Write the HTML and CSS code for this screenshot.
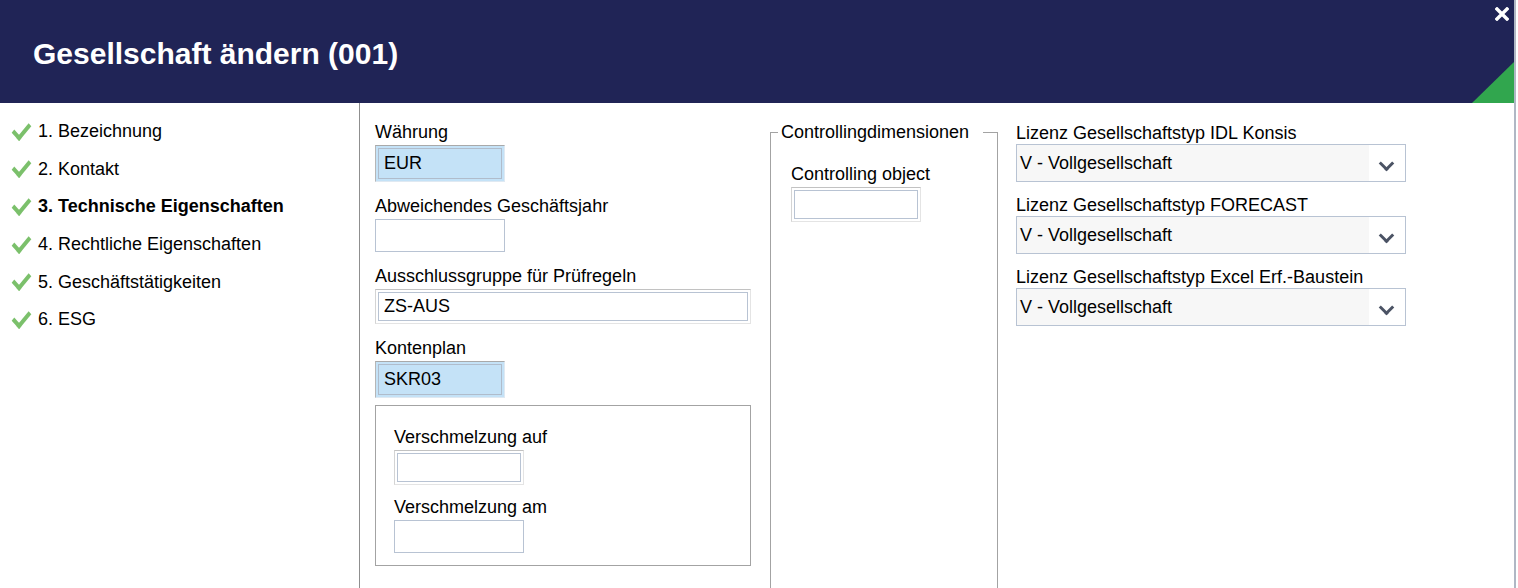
FILE: index.html
```html
<!DOCTYPE html>
<html lang="de">
<head>
    <meta charset="UTF-8" />
    <title>Gesellschaft ändern</title>
    <link rel="stylesheet" href="styles.css">
</head>
<body>
<div class="dialog">
    <div class="header">
        <h1 class="title">Gesellschaft ändern (001)</h1>
        <div class="close">
            <svg width="14" height="14" viewBox="0 0 14 14"><path d="M2 2 L12 12 M12 2 L2 12" stroke="#fff" stroke-width="3.4" stroke-linecap="square"/></svg>
        </div>
        <div class="corner"></div>
    </div>
    <div class="main">
        <ul class="steps">
            <li><span class="check"></span>1. Bezeichnung</li>
            <li><span class="check"></span>2. Kontakt</li>
            <li class="active"><span class="check"></span>3. Technische Eigenschaften</li>
            <li><span class="check"></span>4. Rechtliche Eigenschaften</li>
            <li><span class="check"></span>5. Geschäftstätigkeiten</li>
            <li><span class="check"></span>6. ESG</li>
        </ul>

        <div class="col col-tech">
            <div class="field">
                <label>Währung</label>
                <div class="frame locked short"><input value="EUR" readonly></div>
            </div>
            <div class="field">
                <label>Abweichendes Geschäftsjahr</label>
                <input class="plain short">
            </div>
            <div class="field">
                <label>Ausschlussgruppe für Prüfregeln</label>
                <div class="frame wide"><input value="ZS-AUS"></div>
            </div>
            <div class="field">
                <label>Kontenplan</label>
                <div class="frame locked short"><input value="SKR03" readonly></div>
            </div>
            <div class="merge">
                <div class="field">
                    <label>Verschmelzung auf</label>
                    <div class="frame short"><input></div>
                </div>
                <div class="field">
                    <label>Verschmelzung am</label>
                    <input class="plain short">
                </div>
            </div>
        </div>

        <fieldset class="col-ctrl">
            <legend>Controllingdimensionen</legend>
            <div class="ctrl-body">
                <div class="field">
                    <label>Controlling object</label>
                    <div class="frame short"><input></div>
                </div>
            </div>
        </fieldset>

        <div class="col col-lic">
            <div class="field">
                <label>Lizenz Gesellschaftstyp IDL Konsis</label>
                <div class="select"><span>V - Vollgesellschaft</span><i class="chev"></i></div>
            </div>
            <div class="field">
                <label>Lizenz Gesellschaftstyp FORECAST</label>
                <div class="select"><span>V - Vollgesellschaft</span><i class="chev"></i></div>
            </div>
            <div class="field">
                <label>Lizenz Gesellschaftstyp Excel Erf.-Baustein</label>
                <div class="select"><span>V - Vollgesellschaft</span><i class="chev"></i></div>
            </div>
        </div>
    </div>
</div>
</body>
</html>
```

FILE: styles.css
```css
* {
    margin: 0;
    padding: 0;
    box-sizing: border-box;
}
html, body {
    height: 100%;
    overflow: hidden;
    background: #fff;
    font-family: "Liberation Sans", Arial, sans-serif;
    font-size: 18px;
    color: #000;
}
.dialog {
    width: 1518px;
    height: 100%;
    border-right: 3px solid #fff;
    position: relative;
}
.dialog::after {
    content: "";
    position: absolute;
    top: 0;
    right: -1px;
    width: 2px;
    height: 100%;
    background: #b0b7c4;
}

/* header */
.header {
    height: 103px;
    background: #202456;
    display: flex;
    align-items: center;
    padding-left: 33px;
    position: relative;
    overflow: hidden;
}
.title {
    color: #fff;
    font-size: 30px;
    font-weight: bold;
    margin-top: 4px;
}
.close {
    position: absolute;
    top: 5px;
    right: 6px;
    width: 14px;
    height: 14px;
}
.corner {
    position: absolute;
    right: 0;
    bottom: 0;
    width: 0;
    height: 0;
    border-left: 43px solid transparent;
    border-bottom: 42px solid #31a64e;
}

/* body */
.main {
    display: flex;
    height: 620px;
}
.steps {
    list-style: none;
    width: 360px;
    border-right: 1px solid #8f8f8f;
    padding-top: 10px;
}
.steps li {
    height: 37.6px;
    display: flex;
    align-items: center;
    padding-left: 10px;
}
.steps li.active {
    font-weight: bold;
}
.check {
    width: 18px;
    height: 10px;
    margin-right: 10px;
    position: relative;
    top: -3px;
}
.check::before {
    content: "";
    display: block;
    width: 15px;
    height: 7px;
    margin-left: 2px;
    border-left: 4px solid #7bc06b;
    border-bottom: 4px solid #7bc06b;
    transform: rotate(-50deg) skewX(-8deg);
}

.col {
    padding-top: 19px;
}
.field {
    display: flex;
    flex-direction: column;
    align-items: flex-start;
}
.field label {
    line-height: 20px;
    margin-bottom: 3px;
}

/* inputs */
input {
    font: inherit;
    color: #000;
    outline: none;
}
.plain {
    height: 33px;
    border: 1px solid #b8c3d3;
    background: #fff;
}
.frame {
    height: 35px;
    padding: 2px;
    border: 1px solid #e4e4e4;
    border-top-color: #c2c2c2;
    border-left-color: #d4d4d4;
    background: #fff;
}
.frame input {
    width: 100%;
    height: 100%;
    border: 1px solid #b8c3d3;
    background: #fff;
    padding-left: 5px;
}
.frame.locked {
    height: 37px;
    background: #c4e2f7;
    border-color: #dfe9f2;
    border-top-color: #a9a9a9;
    border-left-color: #b6b6b6;
}
.frame.locked input {
    background: #c4e2f7;
    border-color: #b0bccb;
}
.short {
    width: 130px;
}
.wide {
    width: 376px;
}

.col-tech {
    width: 410px;
    padding-left: 15px;
}
.col-tech .field {
    margin-bottom: 14px;
}
.merge {
    width: 376px;
    height: 161px;
    margin-top: -7px;
    border: 1px solid #a3a3a3;
    padding: 21px 18px 0;
}
.merge .field {
    margin-bottom: 12px;
}

/* controlling fieldset */
.col-ctrl {
    width: 228px;
    margin-top: 19px;
    padding: 0 0 0 7px;
    border: 1px solid #a3a3a3;
    border-bottom: none;
    height: 600px;
}
.col-ctrl legend {
    padding: 0 14px 0 3px;
    line-height: 20px;
}
.ctrl-body {
    padding: 22px 0 0 13px;
}

/* licence selects */
.col-lic {
    margin-left: 18px;
    padding-top: 20px;
}
.col-lic .field {
    margin-bottom: 13px;
}
.col-lic .field label {
    margin-bottom: 1px;
}
.select {
    width: 390px;
    height: 38px;
    border: 1px solid #b8c3d3;
    display: flex;
    align-items: center;
    background: #fff;
}
.select span {
    flex: 1;
    height: 100%;
    display: flex;
    align-items: center;
    padding-left: 3px;
    background: #f7f7f7;
}
.chev {
    width: 36px;
    height: 100%;
    position: relative;
}
.chev::before {
    content: "";
    position: absolute;
    left: 12px;
    top: 13px;
    width: 8px;
    height: 8px;
    border-right: 3.5px solid #4b5364;
    border-bottom: 3.5px solid #4b5364;
    transform: rotate(45deg);
}
```
